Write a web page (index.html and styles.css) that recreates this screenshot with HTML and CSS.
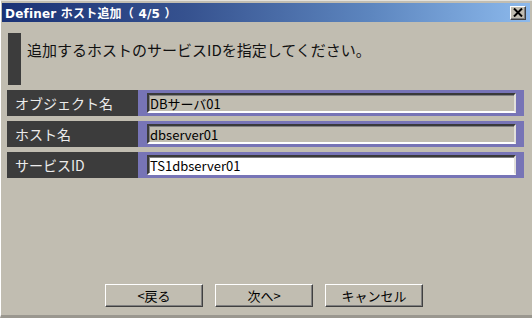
FILE: index.html
```html
<!DOCTYPE html>
<html lang="ja">
<head>
    <meta charset="UTF-8">
    <meta name="viewport" content="width=device-width, initial-scale=1.0">
    <title>Definer ホスト追加</title>
    <link rel="stylesheet" href="styles.css">
</head>
<body>

<div class="window">
    <div class="titlebar">
        <span class="title">Definer ホスト追加（ 4/5 ）</span>
        <button class="close" type="button">
            <svg width="10" height="9" viewBox="0 0 10 9">
                <path d="M1 0.5 L9 8.5 M9 0.5 L1 8.5" stroke="#000" stroke-width="2"/>
            </svg>
        </button>
    </div>

    <div class="header">
        <div class="marker"></div>
        <p>追加するホストのサービスIDを指定してください。</p>
    </div>

    <div class="fields">
        <div class="row">
            <div class="label">オブジェクト名</div>
            <div class="slot"><input type="text" value="DBサーバ01" readonly></div>
        </div>
        <div class="row">
            <div class="label">ホスト名</div>
            <div class="slot"><input type="text" value="dbserver01" readonly></div>
        </div>
        <div class="row">
            <div class="label">サービスID</div>
            <div class="slot"><input type="text" class="editable" value="TS1dbserver01"></div>
        </div>
    </div>

    <div class="buttons">
        <button type="button">&lt;戻る</button>
        <button type="button">次へ&gt;</button>
        <button type="button">キャンセル</button>
    </div>
</div>

</body>
</html>
```

FILE: styles.css
```css
body {
    margin: 0;
    padding: 0;
    background-color: #c1bdb1;
    font-family: "Noto Sans CJK JP", "DejaVu Sans", sans-serif;
}
.window {
    width: 532px;
    height: 318px;
    box-sizing: border-box;
    display: flex;
    flex-direction: column;
    background-color: #c1bdb1;
    border-top: 1px solid #e4e2dc;
    border-left: 1px solid #ffffff;
    border-bottom: 3px solid #9a978f;
    padding: 2px 2px 0 1px;
}
.titlebar {
    height: 19px;
    display: flex;
    align-items: center;
    justify-content: space-between;
    padding: 0 4px 0 3px;
    background: linear-gradient(to right, #1a3276, #36528f 35%, #5d86bf 70%, #8cb9ec);
}
.title {
    color: #fff;
    font-family: "DejaVu Sans", "Noto Sans CJK JP", sans-serif;
    font-weight: bold;
    font-size: 12px;
    letter-spacing: 0.2px;
}
.close {
    width: 16px;
    height: 14px;
    padding: 0;
    display: flex;
    align-items: center;
    justify-content: center;
    background-color: #c1bdb1;
    border: 1px solid;
    border-color: #fff #404040 #404040 #fff;
    box-shadow: inset -1px -1px 0 #808080;
}
.header {
    display: flex;
    align-items: flex-start;
    margin: 11px 0 0 6px;
    height: 52px;
}
.marker {
    width: 13px;
    height: 52px;
    background-color: #3c3c3c;
}
.header p {
    margin: 6px 0 0 6px;
    font-size: 15px;
    line-height: 22px;
    color: #111;
}
.fields {
    display: flex;
    flex-direction: column;
    gap: 5px;
    margin: 5px 6px 0 5px;
}
.row {
    display: flex;
    height: 26px;
}
.label {
    width: 131px;
    background-color: #3c3c3c;
    color: #ececec;
    font-size: 14px;
    line-height: 26px;
    padding-left: 8px;
    box-sizing: border-box;
}
.slot {
    flex: 1;
    display: flex;
    padding: 3px 8px 3px 9px;
    background-color: #7774b6;
}
.slot input {
    flex: 1;
    min-width: 0;
    margin: 0;
    padding: 0 0 0 1px;
    font-family: "Noto Sans CJK JP", "DejaVu Sans", sans-serif;
    font-size: 13px;
    color: #000;
    background-color: #c1bdb1;
    border: 2px solid;
    border-color: #3a3a3a #e2e0da #ffffff #3a3a3a;
    box-shadow: inset 1px 1px 0 #808080;
    outline: none;
}
.slot input.editable {
    background-color: #fff;
}
.buttons {
    margin-top: auto;
    margin-bottom: 8px;
    display: flex;
    justify-content: center;
    gap: 12px;
    padding-right: 4px;
}
.buttons button {
    width: 98px;
    height: 23px;
    padding: 0;
    font-family: "Noto Sans CJK JP", "DejaVu Sans", sans-serif;
    font-size: 13px;
    color: #000;
    background-color: #c1bdb1;
    border: 1px solid;
    border-color: #fff #404040 #404040 #fff;
    box-shadow: inset -1px -1px 0 #808080;
}
```
